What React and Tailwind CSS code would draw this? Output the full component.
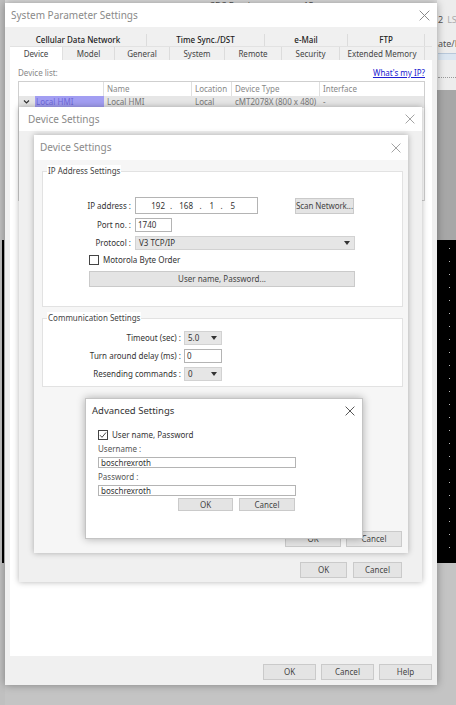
import React from "react";

const X = ({ size = 11, color = "#777" }) => (
  <svg width={size} height={size} viewBox="0 0 10 10">
    <path d="M0.6 0.6L9.4 9.4M9.4 0.6L0.6 9.4" stroke={color} strokeWidth="0.9" fill="none" />
  </svg>
);

const Arrow = () => (
  <svg width="6" height="4" viewBox="0 0 6 4">
    <path d="M0 0H6L3 4Z" fill="#333" />
  </svg>
);

const Btn = ({ children, className = "" }) => (
  <div className={`flex items-center justify-center whitespace-nowrap border border-[#cacaca] bg-[#e4e4e4] text-[8px] text-[#444] shrink-0 ${className}`}>
    {children}
  </div>
);

const Select = ({ value, className = "" }) => (
  <div className={`flex items-center justify-between border border-[#d2d2d2] bg-[#e6e6e6] pl-[3px] pr-[4px] text-[8px] text-[#333] shrink-0 ${className}`}>
    <span>{value}</span>
    <Arrow />
  </div>
);

const Input = ({ value, className = "" }) => (
  <div className={`flex items-center border border-[#b4b4b4] bg-white pl-[2px] text-[8px] text-[#333] shrink-0 ${className}`}>
    {value}
  </div>
);

const Tab = ({ children, className = "" }) => (
  <div className={`flex items-center justify-center whitespace-nowrap border-r border-[#dcdcdc] text-[8px] ${className}`}>{children}</div>
);

export default function App() {
  return (
    <div className="relative w-[456px] h-[705px] overflow-hidden bg-[#c4c4c4] font-['Noto_Sans',sans-serif]">
      {/* background app: top toolbar */}
      <div className="absolute left-0 top-0 w-[456px] h-[10px] bg-[#dedede] flex items-end overflow-hidden">
        <span className="ml-[210px] text-[9px] leading-[9px] text-[#555]">SDS Fonticon</span>
        <span className="ml-[38px] text-[9px] leading-[9px] text-[#555]">15</span>
      </div>
      {/* left strip */}
      <div className="absolute left-0 top-0 w-[5px] h-[705px] bg-[#c0c0c0]" />
      <div className="absolute left-[2px] top-[240px] w-[2px] h-[323px] bg-black" />
      {/* right strip */}
      <div className="absolute left-[437px] top-0 w-[19px] h-[90px] bg-[#ededed] flex flex-col pl-[1px] overflow-hidden">
        <div className="h-[14px] shrink-0" />
        <div className="h-[12px] shrink-0 flex items-center text-[9px] text-[#555] gap-[4px]">
          <span>2</span>
          <span className="text-[#aaa]">LS</span>
        </div>
        <div className="h-[12px] shrink-0" />
        <div className="h-[12px] shrink-0 flex items-center text-[9px] text-[#555] whitespace-nowrap">ate/L</div>
        <div className="h-[3px] shrink-0" />
        <div className="h-[1px] shrink-0 bg-[#b8c8da]" />
        <div className="h-[6px] shrink-0 bg-[#dbe6f1]" />
        <div className="h-[14px] shrink-0" />
        <div className="h-[4px] shrink-0 border-b border-dotted border-[#999]" />
      </div>
      <div className="absolute left-[437px] top-[90px] w-[19px] h-[150px] bg-[#a7a7a7]" />
      <div className="absolute left-[437px] top-[240px] w-[19px] h-[323px] bg-black flex flex-col items-end pr-[6px] pt-[8px] gap-[12px] overflow-hidden">
        {Array.from({ length: 24 }).map((_, i) => (
          <div key={i} className="w-[1px] h-[1px] shrink-0 bg-[#bbb]" />
        ))}
      </div>

      {/* System Parameter Settings window */}
      <div className="absolute left-[5px] top-[3px] w-[432px] h-[682px] flex flex-col bg-[#f0f0f0] shadow-[0_0_8px_rgba(0,0,0,0.35)]">
        <div className="h-[24px] bg-white flex items-center justify-between pl-[6px] pr-[7px] shrink-0">
          <span className="text-[10px] text-[#8a8a8a]">System Parameter Settings</span>
          <X size={11} color="#888" />
        </div>
        <div className="pt-[7px] px-[5px] shrink-0">
          <div className="flex h-[13px] text-[#222] font-medium border-b border-[#e2e2e2]">
            <Tab className="w-[137px]">Cellular Data Network</Tab>
            <Tab className="w-[118px]">Time Sync./DST</Tab>
            <Tab className="w-[83px]">e-Mail</Tab>
            <Tab className="w-[77px]">FTP</Tab>
          </div>
          <div className="flex h-[13px] text-[#444]">
            <Tab className="w-[53px] bg-white border-[#e0e0e0]">Device</Tab>
            <Tab className="w-[52px]">Model</Tab>
            <Tab className="w-[55px]">General</Tab>
            <Tab className="w-[55px]">System</Tab>
            <Tab className="w-[57px]">Remote</Tab>
            <Tab className="w-[58px]">Security</Tab>
            <Tab className="w-[85px]">Extended Memory</Tab>
          </div>
        </div>
        <div className="mx-[5px] h-[596px] bg-white shrink-0 flex flex-col">
          <div className="mt-[7px] h-[12px] flex items-center justify-between pl-[8px] pr-[7px]">
            <span className="text-[8px] text-[#888]">Device list:</span>
            <span className="text-[8px] text-[#2020d0] underline">What's my IP?</span>
          </div>
          <div className="mt-[2px] ml-[8px] mr-[7px] h-[120px] border border-[#cfcfcf] flex flex-col">
            <div className="h-[14px] flex text-[8px] text-[#888]">
              <div className="w-[85px] border-r border-[#e0e0e0]" />
              <div className="w-[88px] border-r border-[#e0e0e0] pl-[3px] flex items-center">Name</div>
              <div className="w-[40px] border-r border-[#e0e0e0] pl-[3px] flex items-center">Location</div>
              <div className="w-[88px] border-r border-[#e0e0e0] pl-[3px] flex items-center">Device Type</div>
              <div className="flex-1 pl-[3px] flex items-center">Interface</div>
            </div>
            <div className="h-[12px] flex text-[8px] text-[#777] bg-[#e6e6e6]">
              <div className="w-[85px] flex items-center">
                <svg width="16" height="8" viewBox="0 0 16 8" className="shrink-0">
                  <path d="M5 2.5L7.5 5L10 2.5" stroke="#333" strokeWidth="1.2" fill="none" />
                </svg>
                <div className="flex-1 h-full bg-[#a29ef2] text-[#6e69d8] pl-[1px] flex items-center">Local HMI</div>
              </div>
              <div className="w-[88px] pl-[3px] flex items-center">Local HMI</div>
              <div className="w-[40px] pl-[3px] flex items-center">Local</div>
              <div className="w-[88px] pl-[3px] flex items-center whitespace-nowrap">cMT2078X (800 x 480)</div>
              <div className="flex-1 pl-[3px] flex items-center">-</div>
            </div>
          </div>
        </div>
        <div className="flex justify-end gap-[5px] pt-[8px] pr-[5px]">
          <Btn className="w-[53px] h-[16px]">OK</Btn>
          <Btn className="w-[53px] h-[16px]">Cancel</Btn>
          <Btn className="w-[53px] h-[16px]">Help</Btn>
        </div>
      </div>

      {/* Device Settings (back) */}
      <div className="absolute left-[19px] top-[107px] w-[403px] h-[475px] flex flex-col bg-[#f0f0f0] shadow-[0_0_6px_rgba(0,0,0,0.3)]">
        <div className="h-[24px] bg-white flex items-center justify-between pl-[9px] pr-[7px] shrink-0">
          <span className="text-[10px] text-[#8a8a8a]">Device Settings</span>
          <X size={10} color="#999" />
        </div>
        <div className="flex-1" />
        <div className="flex justify-end gap-[6px] pr-[20px] pb-[4px]">
          <Btn className="w-[47px] h-[16px]">OK</Btn>
          <Btn className="w-[49px] h-[16px]">Cancel</Btn>
        </div>
      </div>

      {/* Device Settings (front) */}
      <div className="absolute left-[34px] top-[135px] w-[374px] h-[418px] flex flex-col bg-[#f6f6f6] shadow-[0_0_6px_rgba(0,0,0,0.3)]">
        <div className="h-[25px] bg-white flex items-center justify-between pl-[6px] pr-[7px] shrink-0">
          <span className="text-[10px] text-[#8a8a8a]">Device Settings</span>
          <X size={10} color="#999" />
        </div>
        <div className="pl-[8px] pr-[5px] flex flex-col">
          <div className="relative mt-[11px] h-[136px] border border-[#e2e2e2] bg-white flex flex-col pt-[25px]">
            <span className="absolute left-[4px] -top-[7px] px-[1px] bg-white text-[8px] text-[#444]">IP Address Settings</span>
            <div className="flex items-center h-[17px]">
              <div className="w-[88px] text-right text-[8px] text-[#333]">IP address :</div>
              <div className="ml-[4px] w-[123px] h-[17px] border border-[#b4b4b4] bg-white flex items-center text-[8px] text-[#333]">
                <span className="w-[29px] text-right">192</span>
                <span className="w-[12px] text-center">.</span>
                <span className="w-[16px] text-right">168</span>
                <span className="w-[15px] text-center">.</span>
                <span className="w-[6px] text-right">1</span>
                <span className="w-[15px] text-center">.</span>
                <span className="w-[6px] text-right">5</span>
              </div>
              <Btn className="ml-[37px] w-[59px] h-[16px] text-[#333] text-[7.5px] tracking-[-0.1px]">Scan Network...</Btn>
            </div>
            <div className="flex items-center h-[14px] mt-[4px]">
              <div className="w-[88px] text-right text-[8px] text-[#333]">Port no. :</div>
              <Input value="1740" className="ml-[4px] w-[37px] h-[14px]" />
            </div>
            <div className="flex items-center h-[14px] mt-[4px]">
              <div className="w-[88px] text-right text-[8px] text-[#333]">Protocol :</div>
              <Select value="V3 TCP/IP" className="ml-[4px] w-[220px] h-[14px]" />
            </div>
            <div className="flex items-center h-[10px] mt-[5px] ml-[46px]">
              <div className="w-[10px] h-[10px] border border-[#444] bg-white" />
              <span className="ml-[4px] text-[8px] text-[#333]">Motorola Byte Order</span>
            </div>
            <Btn className="mt-[6px] ml-[46px] w-[266px] h-[16px] text-[#333]">User name, Password...</Btn>
          </div>

          <div className="relative mt-[11px] h-[69px] border border-[#e2e2e2] bg-white flex flex-col pt-[12px]">
            <span className="absolute left-[4px] -top-[7px] px-[1px] bg-white text-[8px] text-[#444]">Communication Settings</span>
            <div className="flex items-center h-[14px]">
              <div className="w-[138px] text-right text-[8px] text-[#333]">Timeout (sec) :</div>
              <Select value="5.0" className="ml-[3px] w-[38px] h-[14px]" />
            </div>
            <div className="flex items-center h-[14px] mt-[4px]">
              <div className="w-[138px] text-right text-[8px] text-[#333]">Turn around delay (ms) :</div>
              <Input value="0" className="ml-[3px] w-[38px] h-[14px]" />
            </div>
            <div className="flex items-center h-[14px] mt-[4px]">
              <div className="w-[138px] text-right text-[8px] text-[#333]">Resending commands :</div>
              <Select value="0" className="ml-[3px] w-[38px] h-[14px]" />
            </div>
          </div>
        </div>
        <div className="flex-1" />
        <div className="flex justify-end gap-[5px] pr-[6px] pb-[6px]">
          <Btn className="w-[56px] h-[16px]">OK</Btn>
          <Btn className="w-[56px] h-[16px]">Cancel</Btn>
        </div>
      </div>

      {/* Advanced Settings */}
      <div className="absolute left-[85px] top-[398px] w-[278px] h-[141px] flex flex-col bg-white border border-[#c4c4c4] shadow-[0_0_8px_rgba(0,0,0,0.3)]">
        <div className="h-[24px] flex items-center justify-between pl-[6px] pr-[7px] shrink-0">
          <span className="text-[9.5px] text-[#333]">Advanced Settings</span>
          <X size={10} color="#444" />
        </div>
        <div className="flex flex-col pl-[12px]">
          <div className="mt-[7px] h-[10px] flex items-center">
            <div className="w-[10px] h-[10px] border border-[#444] bg-white flex items-center justify-center">
              <svg width="8" height="8" viewBox="0 0 8 8">
                <path d="M1 4.2L3 6.3L7 1.5" stroke="#333" strokeWidth="0.9" fill="none" />
              </svg>
            </div>
            <span className="ml-[4px] text-[8px] text-[#333]">User name, Password</span>
          </div>
          <div className="mt-[4px] h-[10px] flex items-center text-[8px] text-[#555]">Username :</div>
          <Input value="boschrexroth" className="mt-[3px] w-[198px] h-[11px] border-[#a0a0a0]" />
          <div className="mt-[4px] h-[10px] flex items-center text-[8px] text-[#555]">Password :</div>
          <Input value="boschrexroth" className="mt-[3px] w-[198px] h-[11px] border-[#a0a0a0]" />
          <div className="mt-[2px] flex ml-[80px] gap-[6px]">
            <Btn className="w-[55px] h-[13px] border-[#3c8de0] text-[#333]">OK</Btn>
            <Btn className="w-[56px] h-[13px] text-[#333]">Cancel</Btn>
          </div>
        </div>
      </div>
    </div>
  );
}
